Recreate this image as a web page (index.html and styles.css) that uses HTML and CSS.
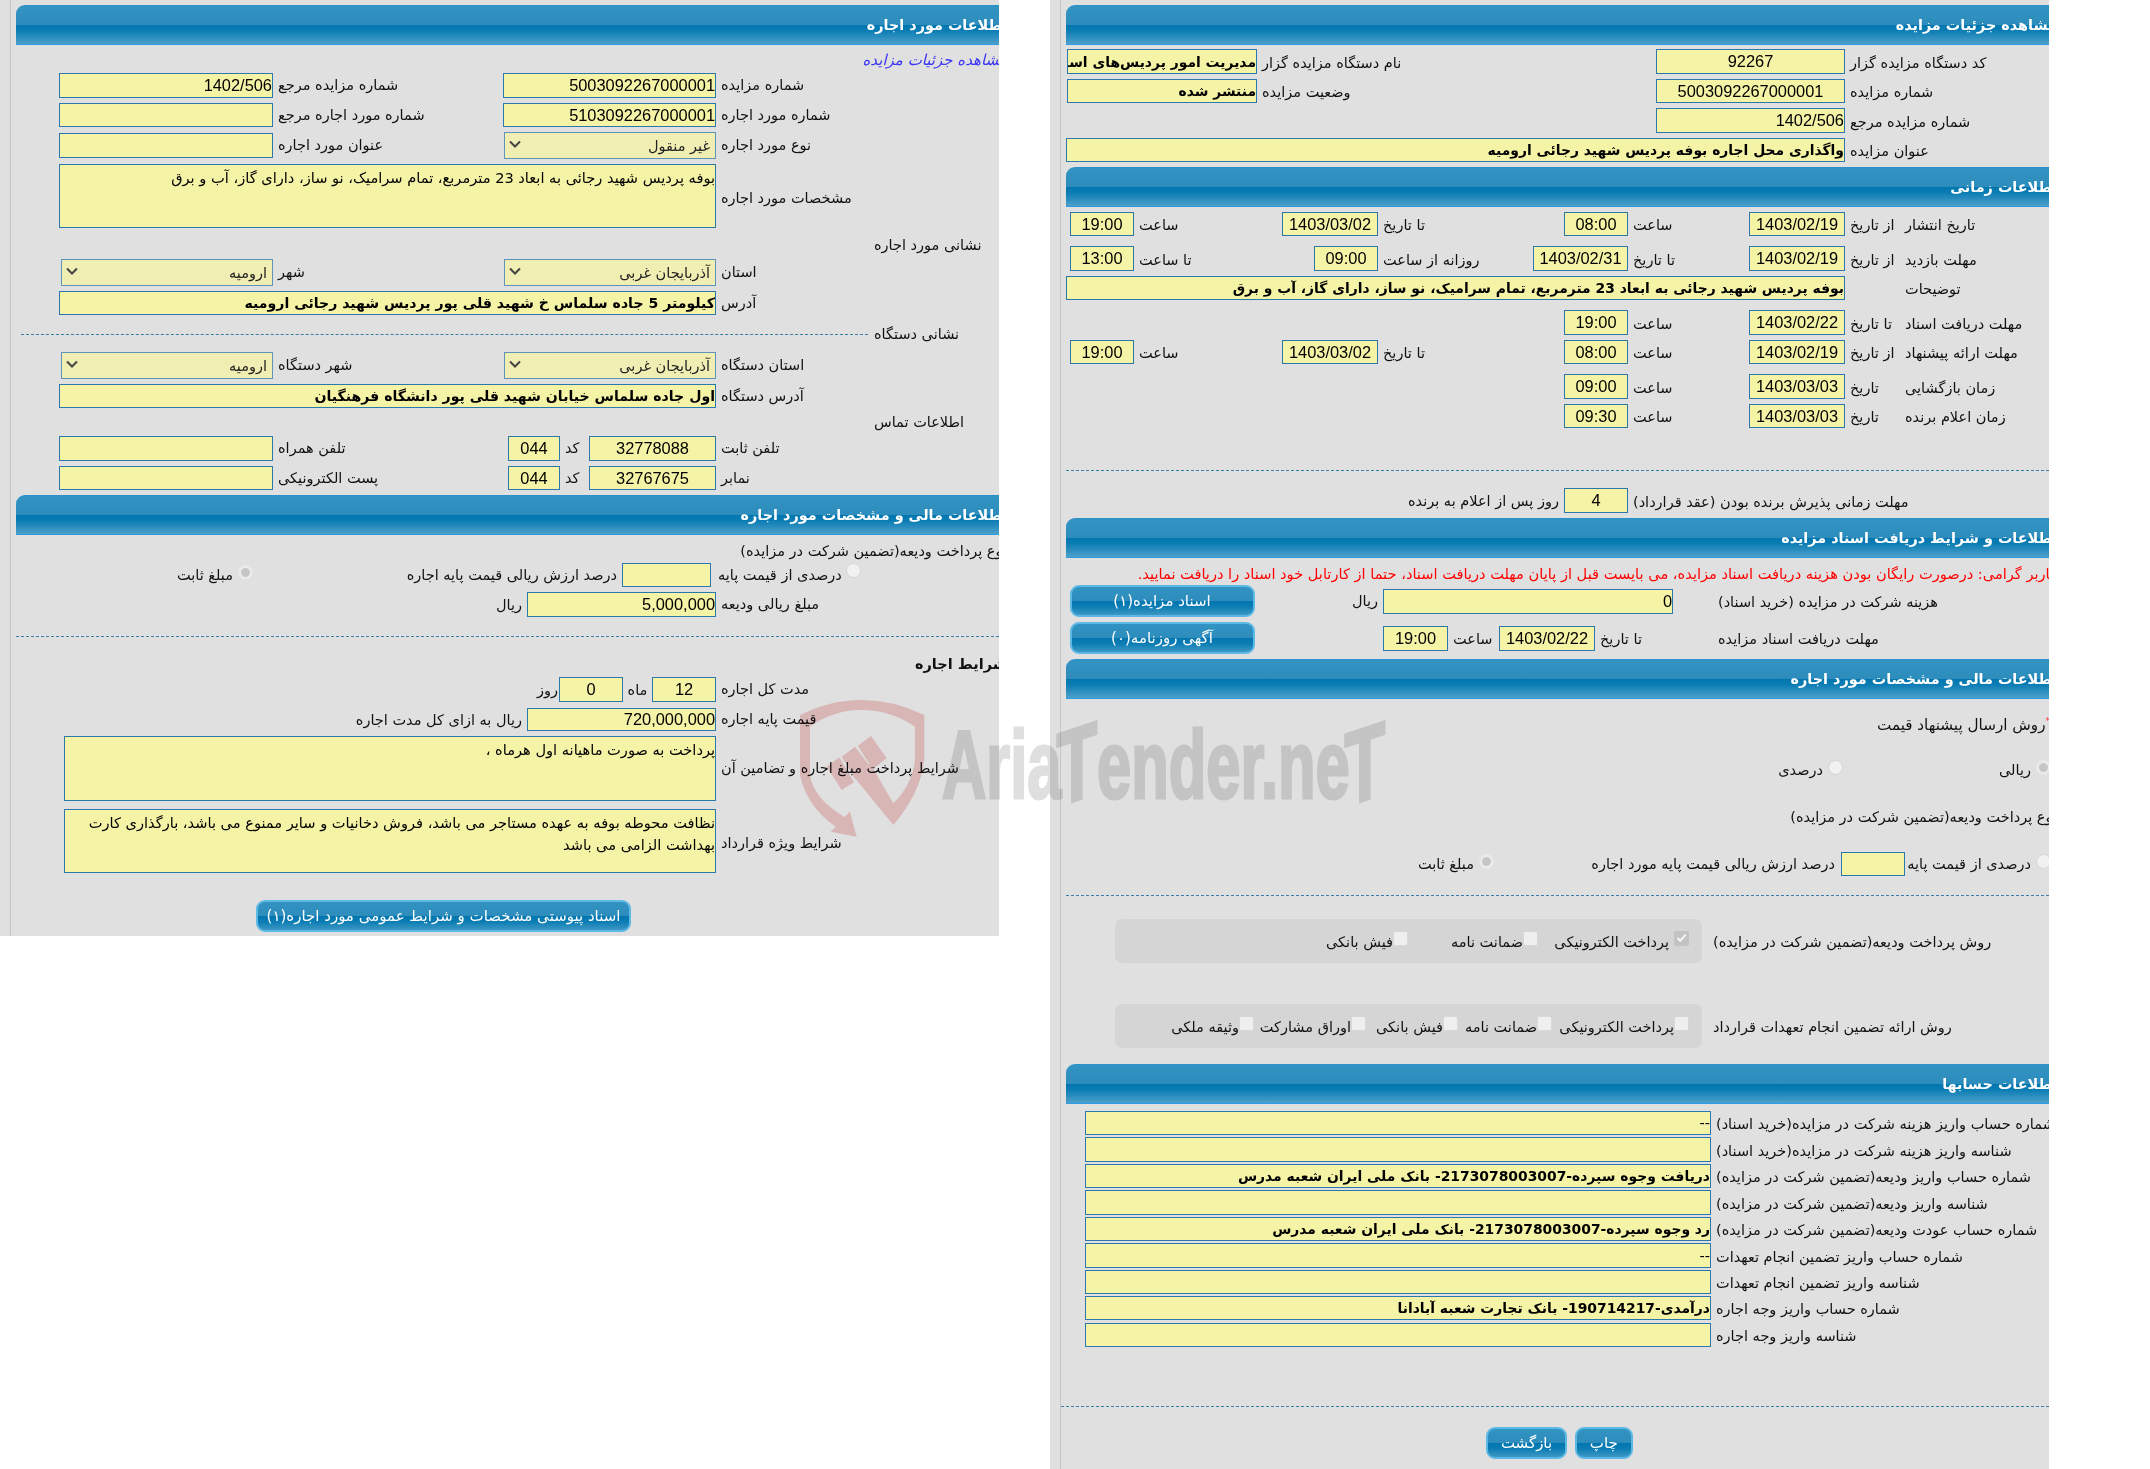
FILE: index.html
```html
<!DOCTYPE html>
<html lang="fa" dir="rtl">
<head>
<meta charset="utf-8">
<title>مشاهده جزئیات مزایده</title>
<link rel="stylesheet" href="styles.css">
</head>
<body>
<div class="page">

<section class="panel p-left">
<div class="sheet">
  <h2 class="head mt5"><span>اطلاعات مورد اجاره</span></h2>
  <div class="row h18 mt6"><a class="link cut">مشاهده جزئیات مزایده</a></div>
  <div class="row h25 mt4"><label class="lbl w283">شماره مزایده</label><div class="fld w213 num">5003092267000001</div><label class="lbl w230">شماره مزایده مرجع</label><div class="fld w214 num">1402/506</div></div>
  <div class="row h24 mt5"><label class="lbl w283">شماره مورد اجاره</label><div class="fld w213 num">5103092267000001</div><label class="lbl w230">شماره مورد اجاره مرجع</label><div class="fld w214"></div></div>
  <div class="row h27 mt5"><label class="lbl w283">نوع مورد اجاره</label><div class="sel w212">غیر منقول<svg class="chev" viewBox="0 0 12 8"><path d="M1 1.5 6 6.5 11 1.5"/></svg></div><label class="lbl w231">عنوان مورد اجاره</label><div class="fld w214 h25"></div></div>
  <div class="row h64 mt5"><label class="lbl w283 low">مشخصات مورد اجاره</label><div class="fld area w657">بوفه پردیس شهید رجائی به ابعاد 23 مترمربع، تمام سرامیک، نو ساز، دارای گاز، آب و برق</div></div>

  <div class="legend h18 mt8"><span class="leg-t">نشانی مورد اجاره</span></div>
  <div class="row h27 mt5"><label class="lbl w283">استان</label><div class="sel w212">آذربایجان غربی<svg class="chev" viewBox="0 0 12 8"><path d="M1 1.5 6 6.5 11 1.5"/></svg></div><label class="lbl w231">شهر</label><div class="sel w212">ارومیه<svg class="chev" viewBox="0 0 12 8"><path d="M1 1.5 6 6.5 11 1.5"/></svg></div></div>
  <div class="row h24 mt5"><label class="lbl w283">آدرس</label><div class="fld w657 strong">کیلومتر 5 جاده سلماس خ شهید قلی پور پردیس شهید رجائی ارومیه</div></div>

  <div class="legend h18 mt10"><span class="leg-t">نشانی دستگاه</span><i class="leg-line"></i></div>
  <div class="row h27 mt9"><label class="lbl w283">استان دستگاه</label><div class="sel w212">آذربایجان غربی<svg class="chev" viewBox="0 0 12 8"><path d="M1 1.5 6 6.5 11 1.5"/></svg></div><label class="lbl w231">شهر دستگاه</label><div class="sel w212">ارومیه<svg class="chev" viewBox="0 0 12 8"><path d="M1 1.5 6 6.5 11 1.5"/></svg></div></div>
  <div class="row h24 mt5"><label class="lbl w283">آدرس دستگاه</label><div class="fld w657 strong">اول جاده سلماس خیابان شهید قلی پور دانشگاه فرهنگیان</div></div>

  <div class="legend h18 mt5"><span class="leg-t">اطلاعات تماس</span></div>
  <div class="row h25 mt5"><label class="lbl w283">تلفن ثابت</label><div class="fld w127 num center">32778088</div><label class="lbl w29">کد</label><div class="fld w52 num center">044</div><label class="lbl w235">تلفن همراه</label><div class="fld w214"></div></div>
  <div class="row h24 mt5"><label class="lbl w283">نمابر</label><div class="fld w127 num center">32767675</div><label class="lbl w29">کد</label><div class="fld w52 num center">044</div><label class="lbl w235">پست الکترونیکی</label><div class="fld w214"></div></div>

  <h2 class="head mt5"><span>اطلاعات مالی و مشخصات مورد اجاره</span></h2>
  <div class="row h18 mt7"><span class="cut">نوع پرداخت ودیعه(تضمین شرکت در مزایده)</span></div>
  <div class="row h24 mt3"><label class="lbl w283 pad2"><i class="radio"></i>درصدی از قیمت پایه</label><div class="fld w89 ml-r5"></div><span class="txt w213">درصد ارزش ریالی قیمت پایه اجاره</span><span class="ropt mr156"><i class="radio dot"></i>مبلغ ثابت</span></div>
  <div class="row h25 mt5"><label class="lbl w283">مبلغ ریالی ودیعه</label><div class="fld w189 num">5,000,000</div><span class="txt">ریال</span></div>
  <hr class="dash mt19 inset">
  <div class="row h18 mt18"><b class="cut">شرایط اجاره</b></div>
  <div class="row h25 mt4"><label class="lbl w283">مدت کل اجاره</label><div class="fld w64 num center">12</div><span class="unit w29">ماه</span><div class="fld w64 num center">0</div><span class="txt tight">روز</span></div>
  <div class="row h23 mt6"><label class="lbl w283">قیمت پایه اجاره</label><div class="fld w189 num">720,000,000</div><span class="txt">ریال به ازای کل مدت اجاره</span></div>
  <div class="row h65 mt5"><label class="lbl w283">شرایط پرداخت مبلغ اجاره و تضامین آن</label><div class="fld area w652">پرداخت به صورت ماهیانه اول هرماه ،</div></div>
  <div class="row h64 mt8"><label class="lbl w283 low">شرایط ویژه قرارداد</label><div class="fld area w652">نظافت محوطه بوفه به عهده مستاجر می باشد، فروش دخانیات و سایر ممنوع می باشد، بارگذاری کارت بهداشت الزامی می باشد</div></div>
  <div class="row h32 mt27 pr368"><button class="btn w375">اسناد پیوستی مشخصات و شرایط عمومی مورد اجاره(۱)</button></div>
</div>
</section>

<section class="panel p-right">
<div class="sheet">
  <h2 class="head mt5"><span>مشاهده جزئیات مزایده</span></h2>
  <div class="row h25 mt4"><label class="lbl w204">کد دستگاه مزایده گزار</label><div class="fld w189 num center">92267</div><label class="lbl w399">نام دستگاه مزایده گزار</label><div class="fld w190 strong clip">مدیریت امور پردیس‌های استان آذربایجان غربی</div></div>
  <div class="row h24 mt5"><label class="lbl w204">شماره مزایده</label><div class="fld w189 num center">5003092267000001</div><label class="lbl w399">وضعیت مزایده</label><div class="fld w190 strong">منتشر شده</div></div>
  <div class="row h25 mt5"><label class="lbl w204">شماره مزایده مرجع</label><div class="fld w189 num">1402/506</div></div>
  <div class="row h24 mt5"><label class="lbl w204">عنوان مزایده</label><div class="fld w779 strong">واگذاری محل اجاره بوفه پردیس شهید رجائی ارومیه</div></div>

  <h2 class="head mt5"><span>اطلاعات زمانی</span></h2>
  <div class="row h24 mt5"><label class="lbl w149">تاریخ انتشار</label><label class="lbl w55">از تاریخ</label><div class="fld w96 num center">1403/02/19</div><label class="lbl w121">ساعت</label><div class="fld w64 num center">08:00</div><label class="lbl w186">تا تاریخ</label><div class="fld w96 num center">1403/03/02</div><label class="lbl w148">ساعت</label><div class="fld w64 num center">19:00</div></div>
  <div class="row h25 mt10"><label class="lbl w149">مهلت بازدید</label><label class="lbl w55">از تاریخ</label><div class="fld w96 num center">1403/02/19</div><label class="lbl w121">تا تاریخ</label><div class="fld w95 num center">1403/02/31</div><label class="lbl w155">روزانه از ساعت</label><div class="fld w64 num center">09:00</div><label class="lbl w180">تا ساعت</label><div class="fld w64 num center">13:00</div></div>
  <div class="row h24 mt5"><label class="lbl w149">توضیحات</label><span class="w55"></span><div class="fld w779 strong">بوفه پردیس شهید رجائی به ابعاد 23 مترمربع، تمام سرامیک، نو ساز، دارای گاز، آب و برق</div></div>
  <div class="row h25 mt10"><label class="lbl w149">مهلت دریافت اسناد</label><label class="lbl w55">تا تاریخ</label><div class="fld w96 num center">1403/02/22</div><label class="lbl w121">ساعت</label><div class="fld w64 num center">19:00</div></div>
  <div class="row h24 mt5"><label class="lbl w149">مهلت ارائه پیشنهاد</label><label class="lbl w55">از تاریخ</label><div class="fld w96 num center">1403/02/19</div><label class="lbl w121">ساعت</label><div class="fld w64 num center">08:00</div><label class="lbl w186">تا تاریخ</label><div class="fld w96 num center">1403/03/02</div><label class="lbl w148">ساعت</label><div class="fld w64 num center">19:00</div></div>
  <div class="row h25 mt10"><label class="lbl w149">زمان بازگشایی</label><label class="lbl w55">تاریخ</label><div class="fld w96 num center">1403/03/03</div><label class="lbl w121">ساعت</label><div class="fld w64 num center">09:00</div></div>
  <div class="row h24 mt5"><label class="lbl w149">زمان اعلام برنده</label><label class="lbl w55">تاریخ</label><div class="fld w96 num center">1403/03/03</div><label class="lbl w121">ساعت</label><div class="fld w64 num center">09:30</div></div>
  <hr class="dash mt42 inset">
  <div class="row h25 mt17"><label class="lbl w421">مهلت زمانی پذیرش برنده بودن (عقد قرارداد)</label><div class="fld w64 num center">4</div><span class="txt">روز پس از اعلام به برنده</span></div>

  <h2 class="head mt5"><span>اطلاعات و شرایط دریافت اسناد مزایده</span></h2>
  <div class="row h18 mt6"><span class="cut red">کاربر گرامی: درصورت رایگان بودن هزینه دریافت اسناد مزایده، می بایست قبل از پایان مهلت دریافت اسناد، حتما از کارتابل خود اسناد را دریافت نمایید.</span></div>
  <div class="row h32 mt3"><label class="lbl w336">هزینه شرکت در مزایده (خرید اسناد)</label><div class="fld w290 h25 num mr40">0</div><span class="txt w128">ریال</span><button class="btn w185">اسناد مزایده(۱)</button></div>
  <div class="row h32 mt5"><label class="lbl w336">مهلت دریافت اسناد مزایده</label><label class="lbl w118">تا تاریخ</label><div class="fld w96 h25 num center">1403/02/22</div><label class="lbl w51">ساعت</label><div class="fld w65 h25 num center">19:00</div><span class="w128"></span><button class="btn w185">آگهی روزنامه(۰)</button></div>

  <h2 class="head mt5"><span>اطلاعات مالی و مشخصات مورد اجاره</span></h2>
  <div class="row h18 mt17"><span class="star">*</span><span class="t15">روش ارسال پیشنهاد قیمت</span></div>
  <div class="row h20 mt26"><span class="ropt w208 edge"><i class="radio dot"></i>ریالی</span><span class="ropt"><i class="radio"></i>درصدی</span></div>
  <div class="row h18 mt28"><span class="cut">نوع پرداخت ودیعه(تضمین شرکت در مزایده)</span></div>
  <div class="row h24 mt26"><span class="ropt w146 edge"><i class="radio"></i>درصدی از قیمت پایه</span><div class="fld w64"></div><span class="txt w347 wide">درصد ارزش ریالی قیمت پایه مورد اجاره</span><span class="ropt"><i class="radio dot"></i>مبلغ ثابت</span></div>
  <hr class="dash mt19 inset">
  <div class="row h44 mt23"><label class="lbl w347 pad11">روش پرداخت ودیعه(تضمین شرکت در مزایده)</label>
    <div class="box"><span class="chk w151"><i class="cbox on"><svg viewBox="0 0 12 10"><path d="M1.5 5 4.5 8 10.5 1.5"/></svg></i>پرداخت الکترونیکی</span><span class="chk w130 snug"><i class="cbox"></i>ضمانت نامه</span><span class="chk snug"><i class="cbox"></i>فیش بانکی</span></div></div>
  <div class="row h44 mt41"><label class="lbl w347 pad11">روش ارائه تضمین انجام تعهدات قرارداد</label>
    <div class="box"><span class="chk w137 snug"><i class="cbox"></i>پرداخت الکترونیکی</span><span class="chk w94 snug"><i class="cbox"></i>ضمانت نامه</span><span class="chk w92 snug"><i class="cbox"></i>فیش بانکی</span><span class="chk w112 snug"><i class="cbox"></i>اوراق مشارکت</span><span class="chk snug"><i class="cbox"></i>وثیقه ملکی</span></div></div>

  <h2 class="head mt16"><span>اطلاعات حسابها</span></h2>
  <div class="row h24 mt7"><label class="lbl w338">شماره حساب واریز هزینه شرکت در مزایده(خرید اسناد)</label><div class="fld w626">--</div></div>
  <div class="row h25 mt2"><label class="lbl w338">شناسه واریز هزینه شرکت در مزایده(خرید اسناد)</label><div class="fld w626"></div></div>
  <div class="row h24 mt2"><label class="lbl w338">شماره حساب واریز ودیعه(تضمین شرکت در مزایده)</label><div class="fld w626 strong">دریافت وجوه سپرده-2173078003007- بانک ملی ایران شعبه مدرس</div></div>
  <div class="row h25 mt2"><label class="lbl w338">شناسه واریز ودیعه(تضمین شرکت در مزایده)</label><div class="fld w626"></div></div>
  <div class="row h24 mt2"><label class="lbl w338">شماره حساب عودت ودیعه(تضمین شرکت در مزایده)</label><div class="fld w626 strong">رد وجوه سپرده-2173078003007- بانک ملی ایران شعبه مدرس</div></div>
  <div class="row h25 mt2"><label class="lbl w338">شماره حساب واریز تضمین انجام تعهدات</label><div class="fld w626">--</div></div>
  <div class="row h24 mt2"><label class="lbl w338">شناسه واریز تضمین انجام تعهدات</label><div class="fld w626"></div></div>
  <div class="row h24 mt2"><label class="lbl w338">شماره حساب واریز وجه اجاره</label><div class="fld w626 strong">درآمدی-190714217- بانک تجارت شعبه آبادانا</div></div>
  <div class="row h24 mt3"><label class="lbl w338">شناسه واریز وجه اجاره</label><div class="fld w626"></div></div>
  <hr class="dash mt59">
  <div class="row h32 mt20 pr416"><button class="btn w57">چاپ</button><button class="btn w81 gap8">بازگشت</button></div>
</div>
</section>

<div class="wm" aria-hidden="true">
  <svg class="wm-logo" viewBox="0 0 450 450">
    <path d="M30 60Q120 15 215 15Q310 15 403 60L403 190Q395 290 310 390L195 250L240 205L310 325Q370 265 375 190L375 95Q300 45 215 45Q130 45 60 95L60 240Q70 310 163 366L180 350L200 425L122 410L137 395Q50 335 30 240Z"/>
    <path d="M203 152 243 123 290 190 248 222Z"/>
    <path d="M155 185 195 155 236 208 195 252Z"/>
    <path d="M110 215 148 187 192 262 155 285Z"/>
  </svg>
  <div class="wm-text">Aria<span class="wm-t">T</span>ender.ne<span class="wm-t">T</span></div>
</div>

</div>
</body>
</html>
```
FILE: styles.css
```css
*{box-sizing:border-box}
html,body{margin:0;padding:0;background:#fff}
body{font-family:"DejaVu Sans",sans-serif;font-size:14.5px;color:#111}
.page{position:relative;display:flex;direction:ltr;width:2150px;height:1469px;overflow:hidden}
.panel{width:999px;padding-left:10px;background:#e0e0e0;overflow:hidden;direction:rtl}
.p-left{height:936px;margin-right:51px}
.p-right{height:1469px}
.sheet{height:100%;border-left:1px solid #c6c6c6;display:flow-root}

.head{height:40px;margin:0 0 0 5px;padding:0;display:flex;align-items:center;border-radius:9px 0 0 0;border-top:1px solid #2c90cb;border-bottom:1px solid #2f9be4;background:linear-gradient(to bottom,#3294c3 0,#2d8cbb 50%,#0276af 51%,#0b7db4 65%,#4da0ca 100%);color:#fff;font-size:14.4px;font-weight:700}
.head span{margin-right:-8px;white-space:nowrap}

.row{display:flex;align-items:center;white-space:nowrap}
.row.pr368{padding-right:368px}
.row.pr416{padding-right:416.5px}
.lbl{display:flex;align-items:center;justify-content:flex-end;padding-left:5px;height:100%;flex:none}
.p-left .lbl{padding-bottom:1px}
.p-right .lbl{padding-top:2px}
.p-left .low{padding-top:3px;padding-bottom:0}
.pad2{padding-left:2px}
.pad2 .radio{margin-left:4px;margin-top:-8px}
.pad11{padding-left:11px}
.txt{flex:none;padding-right:5px}
.txt.tight{padding-right:1px}
.wide{padding-right:6px}
.unit{flex:none;text-align:center}
.cut{margin-right:-8px}
.t15{font-size:15.2px}
.link{color:#3a35f2;font-style:italic;font-size:15px}
.red{color:#f00;font-size:14.6px}
.star{color:#f33;font-size:9px;margin-right:-1px;margin-top:-8px}

.fld{flex:none;align-self:stretch;background:#f5f3a5;border:1px solid #2a78ae;overflow:hidden;text-align:right;white-space:nowrap;display:flex;align-items:center;color:#000}
.num{font-family:"Liberation Sans","DejaVu Sans",sans-serif;font-size:16.4px}
.center{justify-content:center}
.strong{font-weight:700;font-size:13.9px}
.p-left .strong{font-size:14.1px}
.area{white-space:normal;display:block;padding:2px 0 0 6px;line-height:22px;font-size:14.6px}
.fld.h25{height:25px;align-self:center}
.sel{flex:none;align-self:stretch;display:flex;align-items:center;justify-content:space-between;padding:0 5px 0 4px;background:#f0eeb2;border:1px solid #5c94ba;color:#222}
.chev{width:12px;height:8px;flex:none;margin-top:-3px}
.chev path{fill:none;stroke:#444;stroke-width:2}

.legend{display:flex;align-items:center;margin-left:10px}
.leg-t{width:131px;flex:none;display:flex;justify-content:flex-end;padding-left:6px;white-space:nowrap}
.leg-line{flex:1;border-top:1px dashed #3a7ea8}
.dash{height:0;margin:0;border:0;border-top:1px dashed #3a7ea8}
.dash.inset{margin-left:5px}

.radio{display:inline-block;flex:none;width:15px;height:15px;border-radius:50%;background:#f1f1f1;border:1px solid #d4d4d4;position:relative}
.radio.dot{background:#eee;border:2px solid #e8e8e8}
.radio.dot::after{content:"";position:absolute;inset:1px;border-radius:50%;background:#c6c6c6}
.ropt{display:inline-flex;align-items:center;flex:none;gap:5px}
.ropt .radio{margin-top:-5px}
.edge{margin-right:-2px}
.mr156{margin-right:156px}
.ml-r5{margin-right:5px}
.mr40{margin-right:40px}

.box{width:587px;height:100%;flex:none;background:#d5d5d5;border-radius:7px;display:flex;align-items:center;padding-right:13px}
.chk{display:inline-flex;align-items:center;flex:none;gap:5px;padding-top:2px}
.chk.snug{gap:0}
.cbox{display:inline-flex;align-items:center;justify-content:center;flex:none;width:15px;height:15px;border-radius:2px;background:#efefef;border:1px solid #d8d8d8;margin-top:-8px}
.cbox.on{background:#c3c3c3;border-color:#c3c3c3}
.cbox svg{width:11px;height:10px}
.cbox path{fill:none;stroke:#f4f4f4;stroke-width:2.2}

.btn{flex:none;height:32px;padding:0;border:2px solid #5cb8e4;border-radius:9px;background:linear-gradient(to bottom,#3294c3 0,#2d8cbb 50%,#0276af 51%,#0b7db4 70%,#3d97c4 100%);color:#fff;font:15px "DejaVu Sans",sans-serif;text-align:center;white-space:nowrap}
.gap8{margin-right:8px}

.mt2{margin-top:2px}.mt3{margin-top:3px}.mt4{margin-top:4px}.mt5{margin-top:5px}.mt6{margin-top:6px}.mt7{margin-top:7px}.mt8{margin-top:8px}.mt9{margin-top:9px}.mt10{margin-top:10px}.mt16{margin-top:16px}.mt17{margin-top:17px}.mt18{margin-top:18px}.mt19{margin-top:19px}.mt20{margin-top:20px}.mt23{margin-top:23px}.mt26{margin-top:26px}.mt27{margin-top:27px}.mt28{margin-top:28px}.mt41{margin-top:41px}.mt42{margin-top:42px}.mt59{margin-top:59px}
.h18{height:18px}.h20{height:20px}.h23{height:23px}.h24{height:24px}.h25{height:25px}.h27{height:27px}.h32{height:32px}.h44{height:44px}.h64{height:64px}.h65{height:65px}
.w29{width:29px}.w51{width:51px}.w52{width:52px}.w55{width:55px;flex:none}.w57{width:57.5px}.w64{width:64px}.w65{width:65px}.w81{width:81px}.w89{width:89px}.w92{width:92px}.w94{width:94px}.w95{width:95px}.w96{width:96px}.w112{width:112px}.w118{width:118px}.w121{width:121px}.w127{width:127px}.w128{width:128.5px;flex:none}.w130{width:130px}.w137{width:137px}.w146{width:146px}.w148{width:148px}.w149{width:149px}.w151{width:151px}.w155{width:155px}.w180{width:180px}.w185{width:185px}.w186{width:186px}.w189{width:189px}.w190{width:190px}.w204{width:204px}.w208{width:208px}.w212{width:212px}.w213{width:213px}.w214{width:214px}.w230{width:230px}.w231{width:231px}.w235{width:235px}.w283{width:283px}.w290{width:290px}.w336{width:336px}.w338{width:338px}.w347{width:347px}.w375{width:375px}.w399{width:399px}.w421{width:421px}.w626{width:626px}.w652{width:652px}.w657{width:657px}.w779{width:779px}

.wm{position:absolute;left:0;top:0;width:0;height:0;pointer-events:none}
.wm-logo{position:absolute;left:790px;top:695px;width:150px;height:150px;mix-blend-mode:multiply}
.wm-logo path{fill:#f7d0d0}
.wm-text{position:absolute;left:942px;top:710px;font:700 96px/110px "Liberation Sans",sans-serif;color:#dfdfdf;-webkit-text-stroke:3px #dfdfdf;white-space:nowrap;transform-origin:0 0;transform:scaleX(.64);mix-blend-mode:multiply;direction:ltr}
.wm-t{font-size:104px;line-height:0;display:inline-block;transform:translateY(2px) skewY(-12deg);margin-left:-8px}
```
